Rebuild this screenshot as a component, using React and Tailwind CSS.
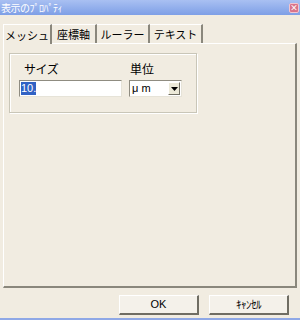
import React from 'react';

const tabs = [
  { label: 'メッシュ', w: 'w-[49px]' },
  { label: '座標軸', w: 'w-[45px]' },
  { label: 'ルーラー', w: 'w-[53px]' },
  { label: 'テキスト', w: 'w-[53px]' },
];

const App = () => {
  return (
    <div className="w-[300px] h-[320px] flex flex-col bg-[#f1ece1] text-black overflow-hidden" style={{ fontFamily: '"Noto Sans CJK JP", "Noto Sans", sans-serif' }}>
      {/* title bar */}
      <div className="h-[15px] flex items-center justify-between bg-gradient-to-b from-[#a9c0f2] to-[#7e9fe6] pl-[1px] pr-[1px]">
        <span className="text-[10px] leading-none text-white tracking-[-0.5px]">表示のﾌﾟﾛﾊﾟﾃｨ</span>
        <div className="w-[10px] h-[10px] rounded-[2px] bg-[#d9738a] border border-[#f3c4cf] flex items-center justify-center text-white text-[8px] leading-none font-bold">×</div>
      </div>

      <div className="flex-1 flex flex-col px-[3px] pt-[9px]">
        {/* tabs */}
        <div className="flex items-end h-[19px] relative z-10">
          {tabs.map((t, i) => (
            <div
              key={t.label}
              className={
                i === 0
                  ? `${t.w} h-[20px] -mb-[1px] flex items-center justify-center pt-[1px] text-[11px] leading-none bg-[#f1ece1] border-t border-l border-white border-r-2 border-r-[#8a877c]`
                  : `${t.w} h-[19px] flex items-center justify-center pt-[1px] text-[11px] leading-none border-t border-white border-r-2 border-r-[#8a877c]`
              }
            >
              {t.label}
            </div>
          ))}
        </div>

        {/* panel */}
        <div className="h-[245px] border-t border-l border-white border-r-2 border-b-2 border-r-[#8a877c] border-b-[#8a877c] pl-[5px] pt-[9px]">
          <div className="w-[188px] h-[60px] border border-[#c9c6b8] shadow-[inset_1px_1px_0_#fff,1px_1px_0_#fff] pl-[9px] pt-[8px]">
            <div className="flex">
              <div className="w-[110px] flex flex-col">
                <span className="text-[12px] leading-[14px] pl-[5px] tracking-[-0.5px]">サイズ</span>
                <div className="mt-[4px] w-[103px] h-[17px] bg-white border border-[#8f8c81] border-r-[#e6e3d8] border-b-[#e6e3d8] flex items-center pl-[1px]">
                  <span className="bg-[#3162c4] text-white text-[11px] leading-[13px]" style={{ fontFamily: '"Liberation Sans", sans-serif' }}>10.</span>
                </div>
              </div>
              <div className="flex flex-col">
                <span className="text-[12px] leading-[14px] pl-[1px]">単位</span>
                <div className="mt-[4px] w-[53px] h-[17px] bg-white border border-[#8f8c81] border-r-[#e6e3d8] border-b-[#e6e3d8] flex items-center justify-between">
                  <span className="text-[11px] leading-none pl-[2px]" style={{ fontFamily: '"Liberation Sans", sans-serif' }}>μ m</span>
                  <div className="w-[12px] h-[13px] mr-[1px] bg-[#ece9d8] border border-white border-r-[#716f64] border-b-[#716f64] flex items-center justify-center">
                    <svg width="7" height="4" viewBox="0 0 7 4"><path d="M0 0h7L3.5 4z" fill="#000" /></svg>
                  </div>
                </div>
              </div>
            </div>
          </div>
        </div>

        {/* buttons */}
        <div className="flex-1 flex justify-end items-start pt-[7px] pr-[8px] gap-[10px]">
          <button className="w-[80px] h-[20px] bg-[#f4f1ea] border border-white border-r-2 border-b-2 border-r-[#6f6d63] border-b-[#6f6d63] text-[11px] leading-none" style={{ fontFamily: '"Liberation Sans", sans-serif' }}>OK</button>
          <button className="w-[80px] h-[20px] bg-[#f4f1ea] border border-white border-r-2 border-b-2 border-r-[#6f6d63] border-b-[#6f6d63] text-[11px] leading-none tracking-[-0.5px] text-black">ｷｬﾝｾﾙ</button>
        </div>
      </div>

      <div className="h-[2px] bg-[#8fa8e6]" />
    </div>
  );
};

export default App;
